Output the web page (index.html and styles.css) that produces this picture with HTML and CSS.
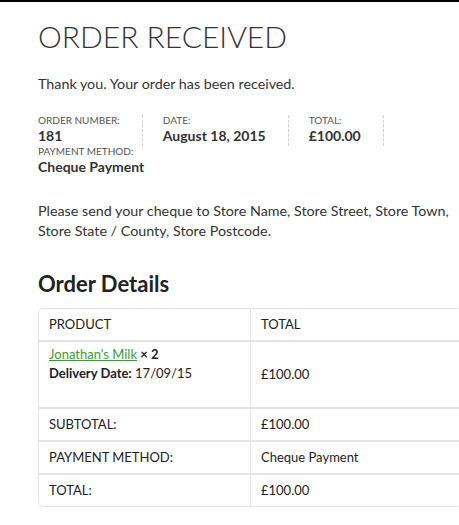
FILE: index.html
```html
<!DOCTYPE html>
<html lang="en">
  <head>
    <meta charset="UTF-8" />
    <meta name="viewport" content="width=device-width, initial-scale=1.0" />
    <title>Order Received</title>
    <link rel="stylesheet" href="styles.css">
  </head>
  <body>
    <div class="page">
      <h1 class="page-title">Order Received</h1>

      <p class="thanks">Thank you. Your order has been received.</p>

      <ul class="order-overview">
        <li>Order Number: <strong>181</strong></li>
        <li>Date: <strong>August 18, 2015</strong></li>
        <li>Total: <strong>&pound;100.00</strong></li>
        <li>Payment Method: <strong>Cheque Payment</strong></li>
      </ul>

      <p class="instructions">
        Please send your cheque to Store Name, Store Street, Store Town, Store
        State / County, Store Postcode.
      </p>

      <h2 class="section-title">Order Details</h2>

      <table class="order-table">
        <thead>
          <tr>
            <th>Product</th>
            <th>Total</th>
          </tr>
        </thead>
        <tbody>
          <tr>
            <td class="product-name">
              <a href="#">Jonathan's Milk</a> <strong>&times; 2</strong>
              <div class="item-meta">
                <strong>Delivery Date:</strong> 17/09/15
              </div>
            </td>
            <td class="product-total">&pound;100.00</td>
          </tr>
        </tbody>
        <tfoot>
          <tr>
            <th>Subtotal:</th>
            <td>&pound;100.00</td>
          </tr>
          <tr>
            <th>Payment Method:</th>
            <td>Cheque Payment</td>
          </tr>
          <tr>
            <th>Total:</th>
            <td>&pound;100.00</td>
          </tr>
        </tfoot>
      </table>
    </div>
  </body>
</html>
```

FILE: styles.css
```css
html {
  overflow-x: hidden;
}
body {
  margin: 0;
  border-top: 2px solid #000;
  font-family: Lato, "Open Sans", sans-serif;
  font-size: 14.3px;
  color: #333;
  background: #fff;
}
.page {
  width: 424px;
  margin-left: 38px;
}
.page-title {
  margin: 16px 0 0;
  font-size: 30px;
  font-weight: 300;
  line-height: 1.2;
  text-transform: uppercase;
  color: #333;
}
.thanks {
  margin: 20px 0 0;
  line-height: 20px;
}
.order-overview {
  list-style: none;
  margin: 21px 0 0;
  padding: 0;
}
.order-overview::after {
  content: "";
  display: block;
  clear: both;
}
.order-overview li {
  float: left;
  margin-right: 20px;
  padding-right: 22px;
  border-right: 1px dashed #d3ced2;
  font-size: 10px;
  line-height: 1;
  text-transform: uppercase;
  color: #555;
}
.order-overview li:last-child {
  border-right: none;
}
.order-overview strong {
  display: block;
  font-size: 14px;
  line-height: 1.5;
  text-transform: none;
  color: #333;
}
.instructions {
  margin: 24px 0 0;
  line-height: 20.3px;
}
.section-title {
  margin: 29px 0 0;
  font-size: 22px;
  font-weight: 700;
  line-height: 1.2;
  color: #222;
}
.order-table {
  width: 424px;
  margin-top: 11px;
  border: 1px solid #e4e4e4;
  border-radius: 5px;
  border-collapse: separate;
  border-spacing: 0;
  font-size: 13px;
  color: #222;
}
.order-table th,
.order-table td {
  width: 50%;
  padding: 5px 10px;
  line-height: 21px;
  text-align: left;
  font-weight: 400;
  vertical-align: middle;
}
.order-table th + th,
.order-table td {
  border-left: 1px solid #e4e4e4;
}
.order-table thead th {
  text-transform: uppercase;
}
.order-table tbody td,
.order-table tfoot th,
.order-table tfoot td {
  border-top: 2px solid #e4e4e4;
}
.order-table tfoot th {
  text-transform: uppercase;
}
.order-table td.product-name {
  border-left: none;
  padding-top: 3px;
  line-height: 19px;
  vertical-align: top;
}
.product-name a {
  color: #3e9a34;
}
.product-name strong {
  font-weight: 700;
}
.item-meta {
  margin-bottom: 19px;
}
```
